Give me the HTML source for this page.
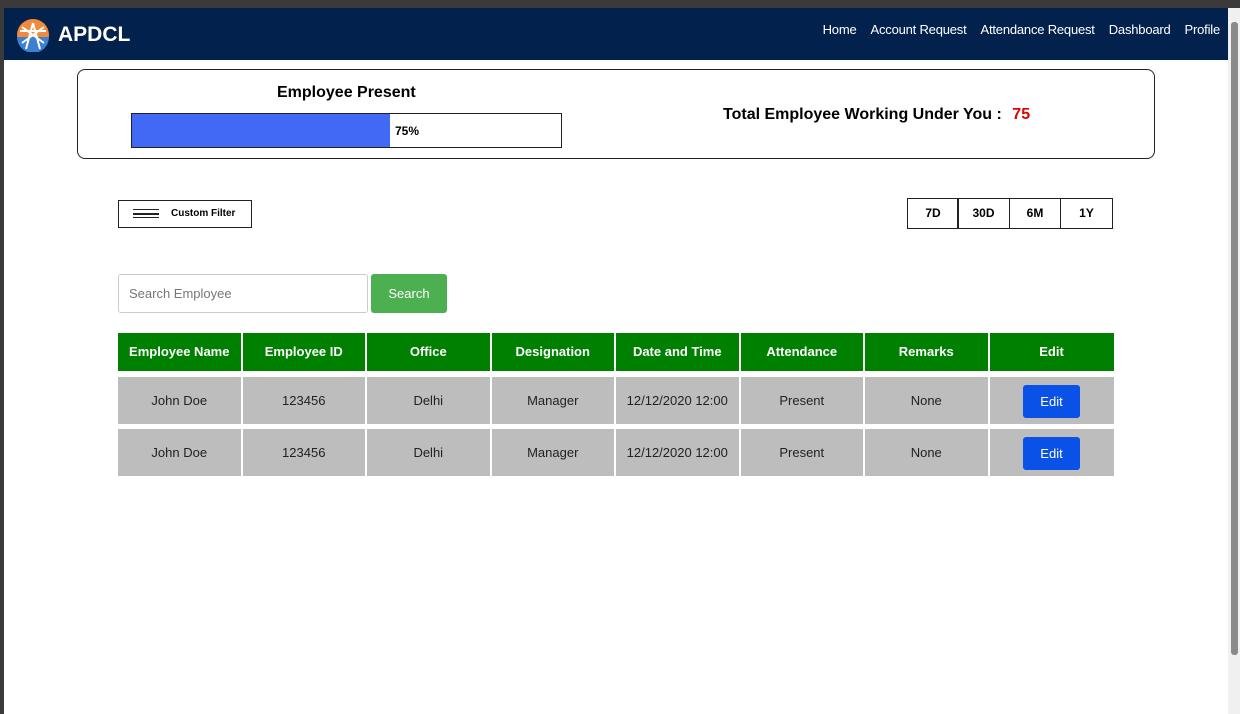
<!DOCTYPE html>
<html><head><style>
*{box-sizing:border-box;margin:0;padding:0}
body{width:1240px;height:714px;overflow:hidden;background:#fff;font-family:"Liberation Sans",sans-serif;position:relative}
.abs{position:absolute}
#top{left:0;top:0;width:1240px;height:8px;background:#3a3a3a}
#lb{left:0;top:0;width:4px;height:714px;background:#3a3a3a}
#nav{left:4px;top:8px;width:1224px;height:52px;background:#03214d;color:#fff}
#nav .brand{position:absolute;left:54px;top:15px;font-weight:bold;font-size:21px}
#nav .links{position:absolute;right:8px;top:14px;font-size:13px;letter-spacing:-0.2px}
#nav .links span{margin-left:14px}
#sb{left:1228px;top:8px;width:12px;height:706px;background:#f0f0f0}
#thumb{left:1231px;top:22px;width:7px;height:633px;background:#8a8a8a;border-radius:3px}
#card{left:77px;top:69px;width:1078px;height:90px;border:1.5px solid #222;border-radius:8px}
.b{font-weight:bold}
.cell{position:absolute;width:122.5px;text-align:center;font-size:13px}
.h{top:333px;height:38px;background:#008000;color:#fff;font-weight:bold;line-height:38px}
.r1{top:377px;height:47px;background:#bdbdbd;line-height:47px;color:#222}
.r2{top:429px;height:47px;background:#bdbdbd;line-height:47px;color:#222}
.eb{display:inline-block;width:57px;height:33px;background:#0a51e8;color:#fff;border-radius:3px;line-height:33px;vertical-align:middle;font-size:13px}
.per{top:198px;height:31px;border:1.5px solid #222;font-size:12px;font-weight:bold;text-align:center;line-height:29px}
</style></head><body>
<div id="top" class="abs"></div>
<div id="lb" class="abs"></div>
<div id="nav" class="abs">
<svg style="position:absolute;left:12px;top:10px" width="34" height="34" viewBox="0 0 34 34"><circle cx="17" cy="17" r="16" fill="#f08a3c"/><path d="M1 19 A16 16 0 0 0 33 19 Z" fill="#3d7fd0"/><path d="M17 5 L10 31 M17 5 L24 31 M4 13 L30 13 M6 25 L28 9 M6 9 L28 25" stroke="#fff" stroke-width="2"/></svg>
<div class="brand">APDCL</div>
<div class="links"><span>Home</span><span>Account Request</span><span>Attendance Request</span><span>Dashboard</span><span>Profile</span></div>
</div>
<div id="sb" class="abs"></div><div id="thumb" class="abs"></div>
<div id="card" class="abs"></div>
<div class="abs b" style="left:277px;top:84px;font-size:16px">Employee Present</div>
<div class="abs" style="left:131px;top:113px;width:431px;height:35px;border:1.5px solid #222"><div style="width:258px;height:100%;background:#4169f5"></div><span style="position:absolute;left:263px;top:10px;font-size:12px;font-weight:bold">75%</span></div>
<div class="abs b" style="left:723px;top:106px;font-size:16px">Total Employee Working Under You : <span style="color:#e00000;margin-left:6px">75</span></div>
<div class="abs" style="left:118px;top:200px;width:134px;height:28px;border:1.5px solid #222;font-size:10px;font-weight:bold"><span style="position:absolute;left:14px;top:8px;width:26px;height:9px;border-top:1.5px solid #222;border-bottom:1.5px solid #222"></span><span style="position:absolute;left:14px;top:12px;width:26px;height:1.5px;background:#222"></span><span style="position:absolute;left:52px;top:7px">Custom Filter</span></div>
<div class="abs per" style="left:907px;width:52px">7D</div>
<div class="abs per" style="left:957px;width:53px">30D</div>
<div class="abs per" style="left:1009px;width:52px">6M</div>
<div class="abs per" style="left:1060px;width:53px">1Y</div>
<div class="abs" style="left:118px;top:274px;width:250px;height:39px;border:1px solid #ccc;border-radius:3px;font-size:13px;color:#777;line-height:37px;padding-left:10px">Search Employee</div>
<div class="abs" style="left:371px;top:274px;width:76px;height:39px;background:#4caf50;border-radius:3px;color:#fff;font-size:13px;text-align:center;line-height:39px">Search</div>
<div class="cell h" style="left:118px">Employee Name</div>
<div class="cell h" style="left:242.5px">Employee ID</div>
<div class="cell h" style="left:367px">Office</div>
<div class="cell h" style="left:491.5px">Designation</div>
<div class="cell h" style="left:616px">Date and Time</div>
<div class="cell h" style="left:740.5px">Attendance</div>
<div class="cell h" style="left:865px">Remarks</div>
<div class="cell h" style="left:989.5px;width:124px">Edit</div>
<div class="cell r1" style="left:118px">John Doe</div>
<div class="cell r1" style="left:242.5px">123456</div>
<div class="cell r1" style="left:367px">Delhi</div>
<div class="cell r1" style="left:491.5px">Manager</div>
<div class="cell r1" style="left:616px">12/12/2020 12:00</div>
<div class="cell r1" style="left:740.5px">Present</div>
<div class="cell r1" style="left:865px">None</div>
<div class="cell r1" style="left:989.5px;width:124px"><span class="eb">Edit</span></div>
<div class="cell r2" style="left:118px">John Doe</div>
<div class="cell r2" style="left:242.5px">123456</div>
<div class="cell r2" style="left:367px">Delhi</div>
<div class="cell r2" style="left:491.5px">Manager</div>
<div class="cell r2" style="left:616px">12/12/2020 12:00</div>
<div class="cell r2" style="left:740.5px">Present</div>
<div class="cell r2" style="left:865px">None</div>
<div class="cell r2" style="left:989.5px;width:124px"><span class="eb">Edit</span></div>
</body></html>
